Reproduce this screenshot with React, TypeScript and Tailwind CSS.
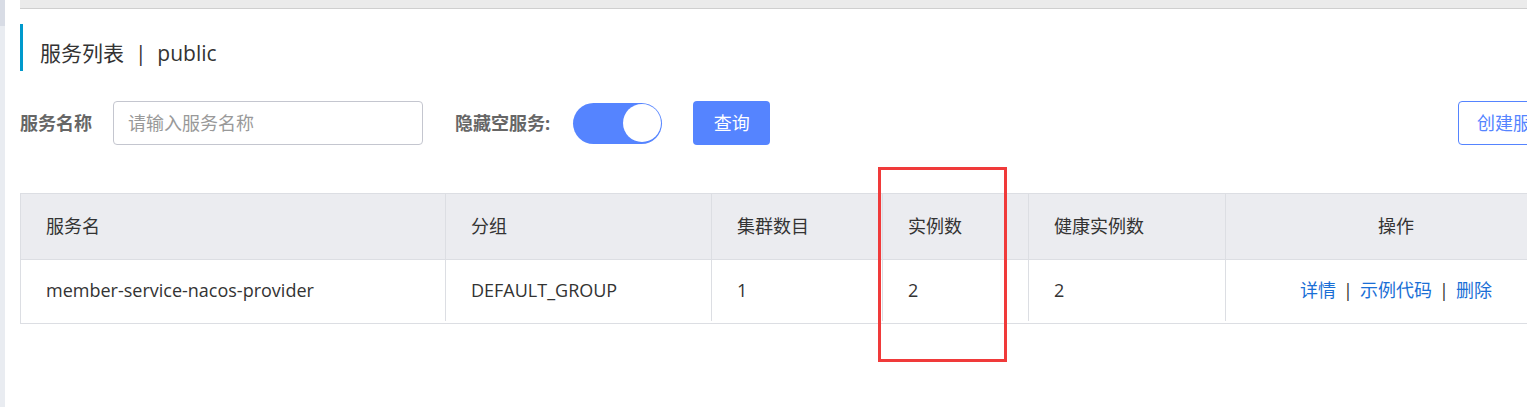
const font = { fontFamily: '"Open Sans", "Noto Sans CJK SC", sans-serif' };

const columns = [
  { label: "服务名", w: "w-[425px]" },
  { label: "分组", w: "w-[266px]" },
  { label: "集群数目", w: "w-[171px]" },
  { label: "实例数", w: "w-[146px]" },
  { label: "健康实例数", w: "w-[197px]" },
];

const row = ["member-service-nacos-provider", "DEFAULT_GROUP", "1", "2", "2"];

export default function App() {
  return (
    <div className="relative flex h-[407px] w-[1527px] overflow-hidden bg-white text-[#333]" style={font}>
      {/* sidebar edge */}
      <div className="flex w-[5px] shrink-0 flex-col">
        <div className="h-[26px] bg-[#d8dce5]" />
        <div className="flex-1 bg-[#e9ecf1]" />
      </div>

      <div className="ml-[15px] w-[1547px] shrink-0">
        <div className="h-[9px] border-b border-[#cfcfcf] bg-[#ebebeb]" />

        {/* title */}
        <div className="mt-[15px] flex h-[47px] items-center border-l-[3px] border-[#0099cc] pl-[17px] pt-[12px] text-[21px]">
          服务列表&nbsp;&nbsp;|&nbsp;&nbsp;public
        </div>

        {/* filters */}
        <div className="mt-[30px] flex h-[44px] items-center">
          <span className="text-[18px] font-bold text-[#666]">服务名称</span>
          <input
            className="ml-[21px] h-[44px] w-[310px] rounded-[4px] border border-[#c4c6cf] px-[14px] text-[18px] outline-none placeholder:text-[#999]"
            placeholder="请输入服务名称"
          />
          <span className="ml-[32px] text-[18px] font-bold text-[#666]">隐藏空服务:</span>
          <div className="ml-[23px] flex h-[41px] w-[89px] items-center justify-end rounded-full bg-[#5584ff] pr-[1px]">
            <div className="h-[38px] w-[38px] rounded-full bg-white" />
          </div>
          <button className="ml-[31px] h-[44px] w-[77px] rounded-[4px] bg-[#5584ff] text-[18px] text-white">查询</button>
          <button className="ml-auto mr-[-9px] h-[44px] w-[118px] rounded-[4px] border border-[#5584ff] pl-[18px] text-left text-[18px] text-[#5584ff]">
            创建服务
          </button>
        </div>

        {/* table */}
        <div className="mt-[48px] border border-[#dcdee3] text-[18px]">
          <div className="flex h-[65px] items-center bg-[#ebecf0]">
            {columns.map((c) => (
              <div key={c.label} className={`${c.w} flex h-full items-center border-r border-[#dcdee3] pl-[25px]`}>
                {c.label}
              </div>
            ))}
            <div className="flex h-full flex-1 items-center justify-center">操作</div>
          </div>
          <div className="flex h-[64px] items-center border-t border-[#dcdee3] pb-[2px]">
            {row.map((v, i) => (
              <div key={i} className={`${columns[i].w} flex h-full items-center border-r border-[#dcdee3] pl-[25px]`}>
                {v}
              </div>
            ))}
            <div className="flex h-full flex-1 items-center justify-center text-[#1a6fd6]">
              <span>详情</span>
              <span className="mx-[7px] text-[#333]">|</span>
              <span>示例代码</span>
              <span className="mx-[7px] text-[#333]">|</span>
              <span>删除</span>
            </div>
          </div>
        </div>
      </div>

      {/* annotation box */}
      <div className="absolute left-[878px] top-[167px] h-[195px] w-[129px] border-[3px] border-[#f03a3a]" />
    </div>
  );
}
